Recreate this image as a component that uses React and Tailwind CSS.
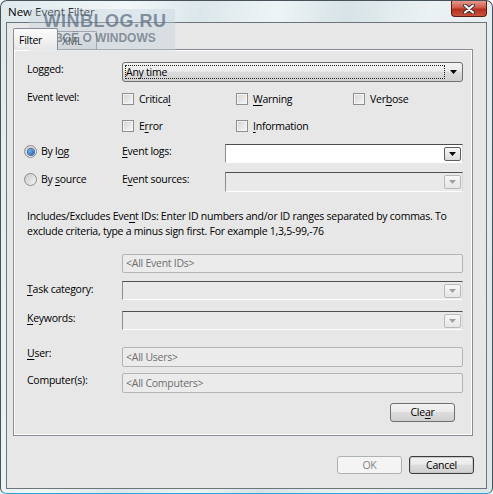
import React from 'react'

const Acc = ({ t, i }) =>
  i == null ? t : (
    <>
      {t.slice(0, i)}
      <span className="underline underline-offset-[2px]">{t[i]}</span>
      {t.slice(i + 1)}
    </>
  )

function Arrow({ dim }) {
  return (
    <svg width="7" height="4" viewBox="0 0 7 4">
      <path d="M0 0H7L3.5 4Z" fill={dim ? '#a0a0a0' : '#000'} />
    </svg>
  )
}

function Check({ t, i, w }) {
  return (
    <div className={`flex items-center h-[14px] ${w}`}>
      <span className="w-[12px] h-[12px] border border-[#8e8f8f] bg-[linear-gradient(135deg,#d4d4d4,#f7f7f7)] shadow-[inset_0_0_0_1px_#f4f4f4]" />
      <span className="ml-[5px]"><Acc t={t} i={i} /></span>
    </div>
  )
}

function Radio({ on, t, i }) {
  return (
    <div className="flex items-center w-[98px] h-[15px]">
      <span className="w-[13px] h-[13px] rounded-full border border-[#8b8b8b] bg-[linear-gradient(135deg,#c9c9c9,#f5f5f5)] flex items-center justify-center">
        {on && <span className="w-[6px] h-[6px] rounded-full bg-[radial-gradient(circle_at_35%_35%,#6fb3f0,#1b4f9a)] shadow-[0_0_0_1px_#3f6fb0]" />}
      </span>
      <span className="ml-[4px]"><Acc t={t} i={i} /></span>
    </div>
  )
}

function Combo({ white, h = 'h-[19px]' }) {
  return (
    <div className={`flex-1 ${h} flex items-center justify-end border border-t-[#4f4f4f] border-l-[#8d8d8d] border-r-[#d9d9d9] border-b-[#ffffff] ${white ? 'bg-white' : 'bg-[#e9e9e9]'}`}>
      <span className={`w-[17px] h-[14px] mr-[1px] rounded-[2px] flex items-center justify-center border ${white ? 'border-[#5e5e5e] bg-[linear-gradient(#f6f6f6,#dcdcdc)]' : 'border-[#b9b9b9] bg-[linear-gradient(#f7f7f7,#e6e6e6)]'}`}>
        <Arrow dim={!white} />
      </span>
    </div>
  )
}

function Box({ t }) {
  return (
    <div className="flex-1 h-[20px] flex items-center pl-[3px] border border-[#b4b4b4] rounded-[2px] bg-[#ebebeb] text-[#6e6e6e]">
      {t}
    </div>
  )
}

function Label({ t, i, cls = '' }) {
  return <div className={`w-[95px] shrink-0 ${cls}`}><Acc t={t} i={i} /></div>
}

export default function App() {
  return (
    <div className="w-[493px] h-[494px] bg-white text-[10.5px] leading-[15px] tracking-[-0.25px] text-black font-['Open_Sans','Noto_Sans',sans-serif]">
      <div className="relative w-full h-full flex flex-col rounded-t-[7px] rounded-b-[6px] border border-[#46535b] border-b-[#2ea4dc] bg-[linear-gradient(100deg,#dfe9ec_0%,#f2f7f8_22%,#dce7eb_35%,#eef4f5_48%,#d7e3e7_60%,#ecf2f3_75%,#dbe6ea_100%)] px-[5px] pb-[4px]">
        {/* title bar */}
        <div className="h-[21px] flex items-center pl-[2px] text-[11.5px] tracking-normal text-black">New Event Filter</div>

        {/* close button */}
        <div className="absolute right-[5px] top-0 w-[36px] h-[16px] rounded-b-[4px] border border-t-0 border-[#5b1a14] bg-[linear-gradient(#e59a8d_0%,#cf5a48_45%,#b3301f_55%,#c9523d_100%)] flex items-center justify-center">
          <svg width="12" height="10" viewBox="0 0 12 10">
            <path d="M2 1.5L10 8.5M10 1.5L2 8.5" stroke="#3a3a3a" strokeWidth="4" strokeLinecap="round" />
            <path d="M2 1.5L10 8.5M10 1.5L2 8.5" stroke="#fff" strokeWidth="2" strokeLinecap="round" />
          </svg>
        </div>

        {/* client area */}
        <div className="flex-1 border border-[#6b757a] bg-[#e7e7e7] flex flex-col">
          {/* tabs */}
          <div className="flex items-end h-[21px] mt-[5px] ml-[6px]">
            <div className="relative z-10 w-[45px] h-[22px] -mb-[1px] pl-[5px] pt-[4px] border border-b-0 border-[#898c95] rounded-t-[2px] bg-[linear-gradient(#fbfbfb,#f0f0f0_60%,#e7e7e7)]">Filter</div>
            <div className="w-[39px] h-[18px] pl-[4px] pt-[2px] border border-l-0 border-b-0 border-[#898c95] rounded-tr-[2px] bg-[linear-gradient(#ececec,#d9d9d9)]">XML</div>
          </div>

          {/* tab panel */}
          <div className="ml-[6px] w-[460px] h-[387px] border border-[#898c95] bg-[#e7e7e7] shadow-[inset_1px_1px_0_#ffffff,inset_-1px_-1px_0_#ffffff] pl-[13px] pr-[9px] pt-[12px] flex flex-col">
            {/* logged */}
            <div className="flex items-start h-[20px]">
              <Label t="Logged:" />
              <div className="relative flex-1 h-[20px] rounded-[3px] border border-[#6f6f6f] bg-[linear-gradient(#f3f3f3,#ebebeb_45%,#dcdcdc_50%,#d0d0d0)] flex items-center">
                <div className="absolute left-[2px] top-[2px] bottom-[2px] right-[17px] border border-dotted border-[#222]" />
                <span className="pl-[3px]">Any time</span>
                <span className="absolute right-[5px] top-[7px] flex"><Arrow /></span>
              </div>
            </div>

            {/* event level */}
            <div className="flex items-start mt-[10px]">
              <Label t="Event level:" cls="-mt-[2px]" />
              <div className="flex flex-col gap-[13px]">
                <div className="flex">
                  <Check t="Critical" i={7} w="w-[114px]" />
                  <Check t="Warning" i={0} w="w-[117px]" />
                  <Check t="Verbose" i={3} w="" />
                </div>
                <div className="flex">
                  <Check t="Error" i={1} w="w-[114px]" />
                  <Check t="Information" i={0} w="" />
                </div>
              </div>
            </div>

            {/* by log */}
            <div className="flex items-start h-[19px] mt-[11px] -ml-[3px]">
              <Radio on t="By log" i={4} />
              <div className="w-[103px] shrink-0"><Acc t="Event logs:" i={0} /></div>
              <Combo white />
            </div>

            {/* by source */}
            <div className="flex items-start h-[20px] mt-[9px] -ml-[3px]">
              <Radio t="By source" i={3} />
              <div className="w-[103px] shrink-0"><Acc t="Event sources:" i={1} /></div>
              <Combo h="h-[20px]" />
            </div>

            {/* event ids text */}
            <div className="mt-[17px] whitespace-nowrap">
              Includes/Excludes Eve<span className="underline underline-offset-[2px]">n</span>t IDs: Enter ID numbers and/or ID ranges separated by commas. To
              <br />
              exclude criteria, type a minus sign first. For example 1,3,5-99,-76
            </div>

            <div className="flex mt-[15px] ml-[95px] h-[19px]">
              <div className="flex-1 h-[19px] flex items-center pl-[3px] border border-[#b4b4b4] rounded-[2px] bg-[#ebebeb] text-[#6e6e6e]">&lt;All Event IDs&gt;</div>
            </div>

            <div className="flex items-start mt-[8px] h-[19px]">
              <Label t="Task category:" i={0} cls="pt-[1px]" />
              <Combo />
            </div>

            <div className="flex items-start mt-[11px] h-[19px]">
              <Label t="Keywords:" i={0} />
              <Combo />
            </div>

            <div className="flex items-start mt-[17px] h-[20px]">
              <Label t="User:" i={0} cls="-mt-[1px]" />
              <Box t="<All Users>" />
            </div>

            <div className="flex items-start mt-[6px] h-[20px]">
              <Label t="Computer(s):" />
              <Box t="<All Computers>" />
            </div>

            <div className="flex justify-end mt-[10px] mr-[8px]">
              <button className="w-[65px] h-[19px] rounded-[3px] border border-[#707070] bg-[linear-gradient(#f2f2f2,#ebebeb_45%,#dddddd_50%,#cfcfcf)] text-black leading-[15px]">
                Cle<span className="underline underline-offset-[2px]">a</span>r
              </button>
            </div>
          </div>

          {/* buttons */}
          <div className="flex justify-end gap-[7px] mt-[20px] mr-[12px]">
            <button className="w-[65px] h-[18px] rounded-[3px] border border-[#adb2b5] bg-[#f4f4f4] text-[#838383] leading-[15px]">OK</button>
            <button className="w-[65px] h-[18px] rounded-[3px] border border-[#3c3c3c] bg-[linear-gradient(#f2f2f2,#ebebeb_45%,#dddddd_50%,#cfcfcf)] shadow-[inset_0_0_0_1px_#c9c9c9] text-black leading-[15px]">Cancel</button>
          </div>
        </div>

        {/* watermark */}
        <div className="absolute left-[28px] top-[8px] w-[146px] h-[42px] bg-[#c5d3df]/40 flex flex-col items-center pointer-events-none tracking-normal font-['Liberation_Sans',Arial,sans-serif] font-bold">
          <div className="text-[18px] leading-[20px] mt-[2px] ml-[6px] text-[#56687b]/70 tracking-[0.5px]">WINBLOG.RU</div>
          <div className="text-[12px] leading-[13px] mt-[1px] ml-[6px] text-[#5f6c78]/70">ВСЁ О WINDOWS</div>
        </div>
      </div>
    </div>
  )
}
